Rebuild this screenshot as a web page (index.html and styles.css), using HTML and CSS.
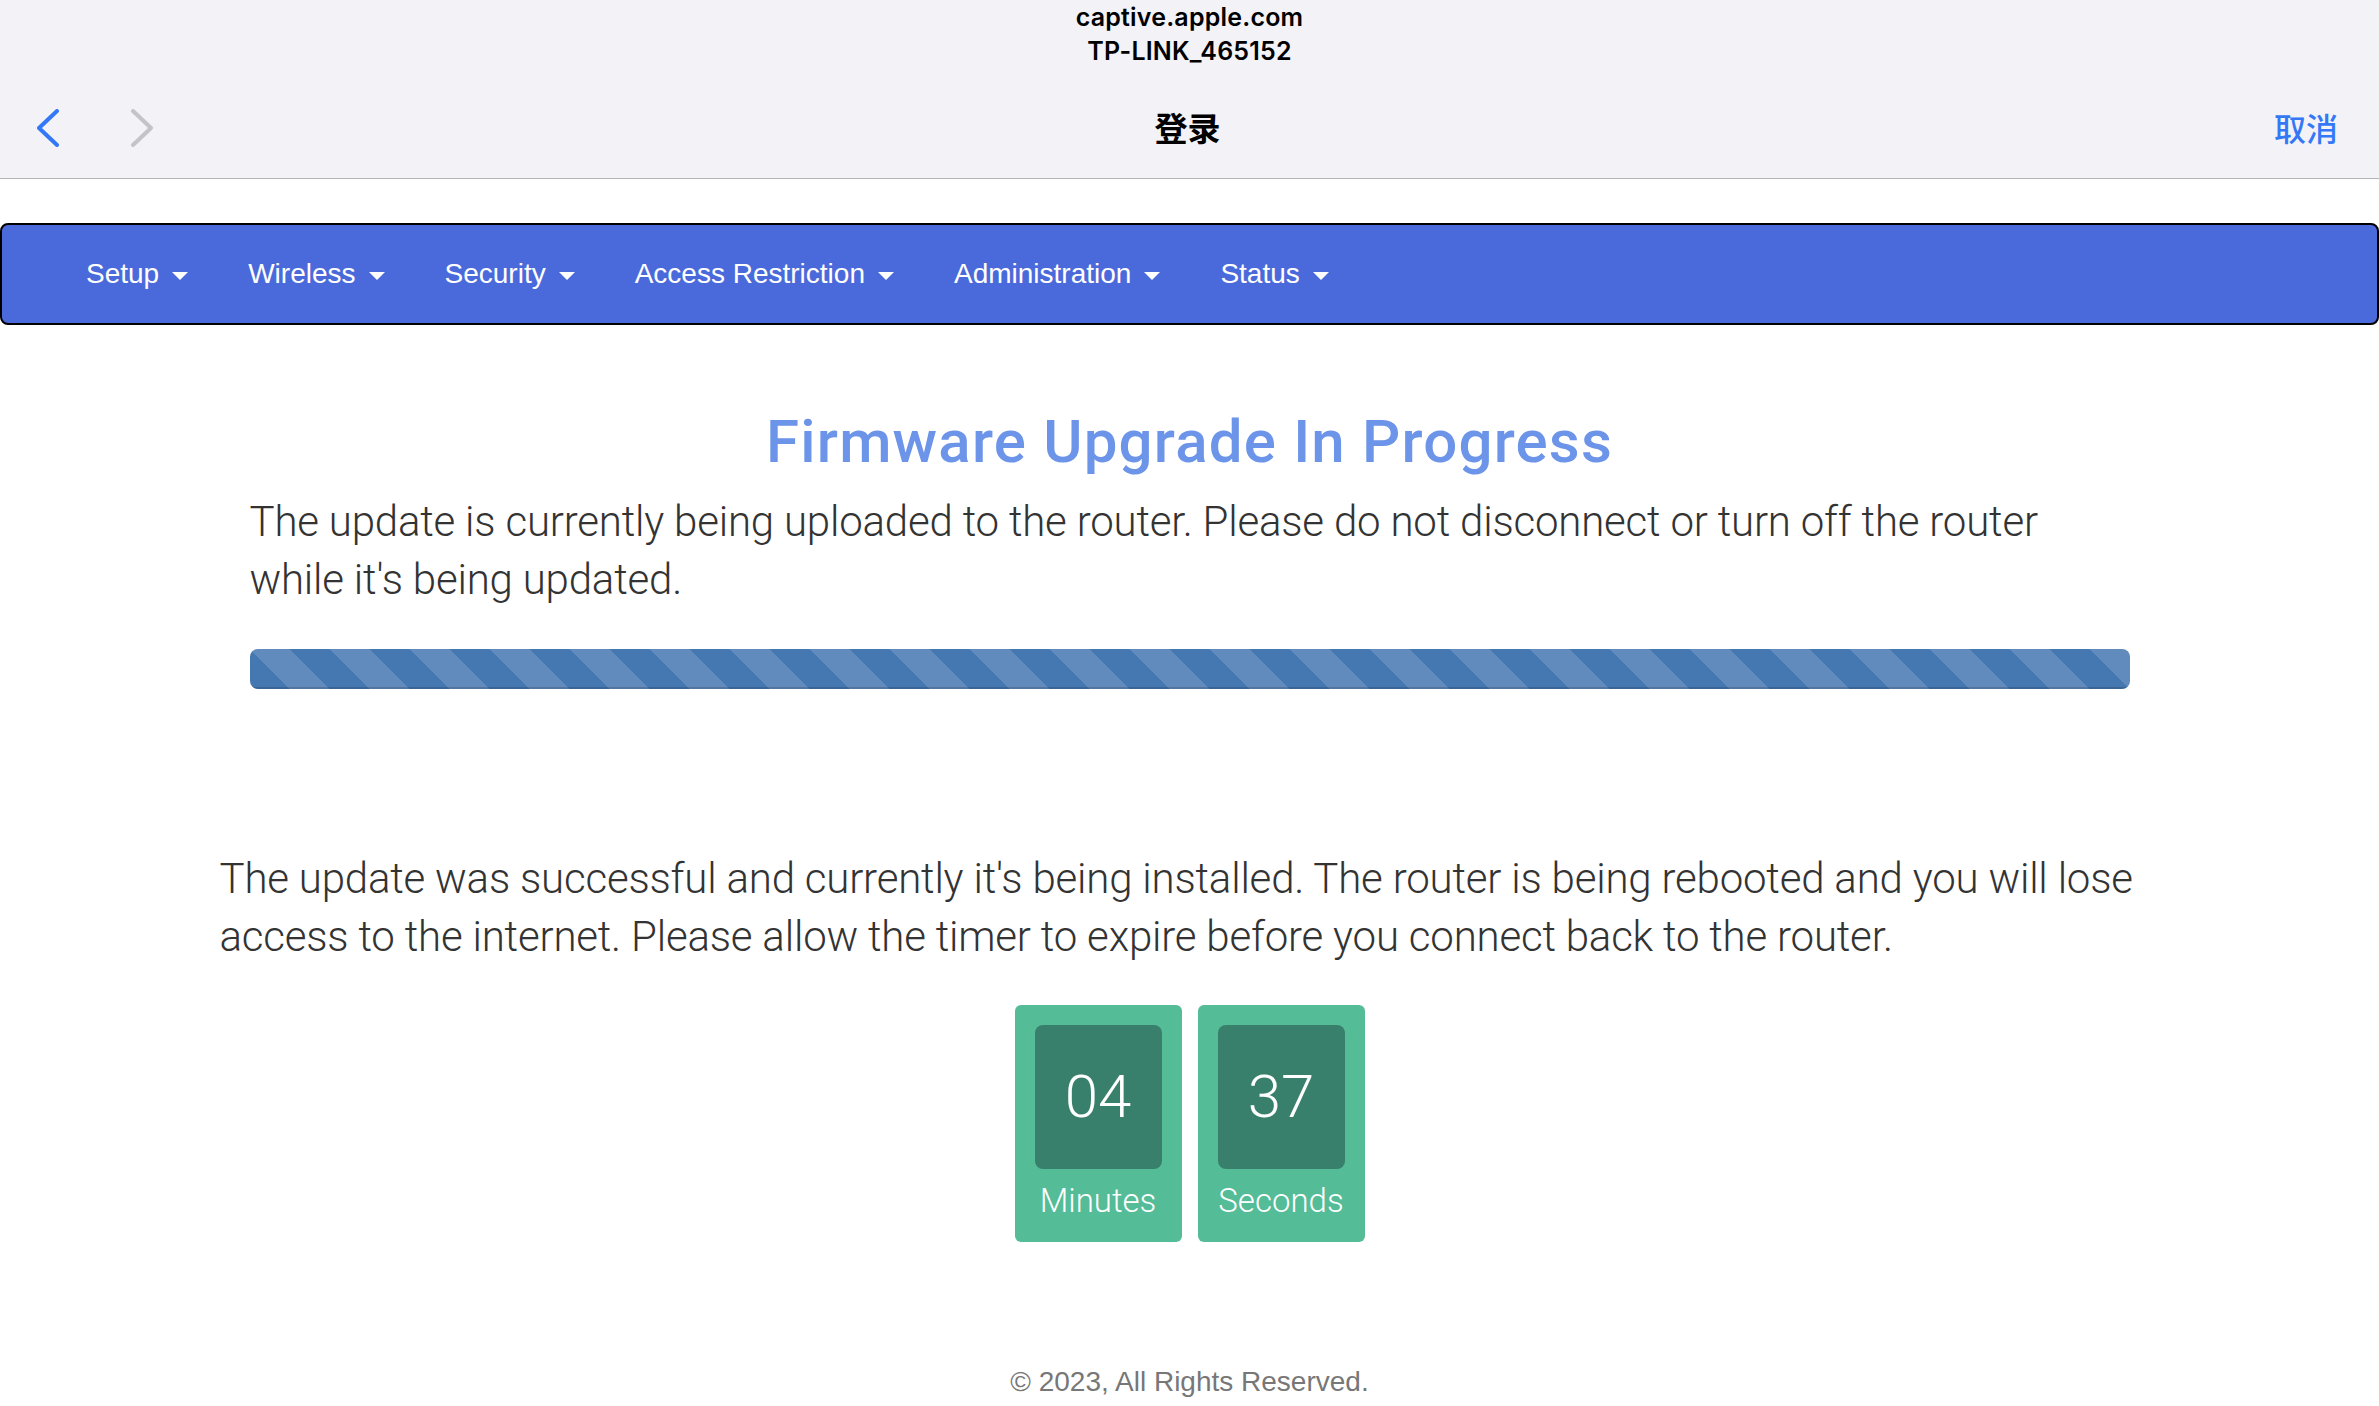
FILE: index.html
```html
<!DOCTYPE html>
<html lang="en">
<head>
<meta charset="utf-8">
<title>Firmware Upgrade In Progress</title>
<link rel="stylesheet" href="styles.css">
</head>
<body>
<header class="ios-bar">
  <div class="ios-host">captive.apple.com</div>
  <div class="ios-ssid">TP-LINK_465152</div>
  <div class="ios-row">
    <div class="ios-arrows">
      <svg class="chev chev-back" width="22" height="38" viewBox="0 0 22 38"><polyline points="20,2 2,19 20,36"/></svg>
      <svg class="chev chev-fwd" width="22" height="38" viewBox="0 0 22 38"><polyline points="2,2 20,19 2,36"/></svg>
    </div>
    <div class="ios-title">登录</div>
    <div class="ios-cancel">取消</div>
  </div>
</header>

<nav class="navbar">
  <ul class="nav">
    <li><a>Setup<span class="caret"></span></a></li>
    <li><a>Wireless<span class="caret"></span></a></li>
    <li><a>Security<span class="caret"></span></a></li>
    <li><a>Access Restriction<span class="caret"></span></a></li>
    <li><a>Administration<span class="caret"></span></a></li>
    <li><a>Status<span class="caret"></span></a></li>
  </ul>
</nav>

<main class="container">
  <h2 class="title">Firmware Upgrade In Progress</h2>
  <p class="lead lead-indent">The update is currently being uploaded to the router. Please do not disconnect or turn off the router while it's being updated.</p>
  <div class="progress"><div class="progress-bar"></div></div>
  <p class="lead lead-wide">The update was successful and currently it's being installed. The router is being rebooted and you will lose access to the internet. Please allow the timer to expire before you connect back to the router.</p>
  <div class="countdown">
    <div class="cd-box">
      <div class="cd-num">04</div>
      <div class="cd-label">Minutes</div>
    </div>
    <div class="cd-box">
      <div class="cd-num">37</div>
      <div class="cd-label">Seconds</div>
    </div>
  </div>
</main>

<footer class="foot">© 2023, All Rights Reserved.</footer>
</body>
</html>
```

FILE: styles.css
```css
* { box-sizing: border-box; }

html, body {
  margin: 0;
  padding: 0;
  background: #ffffff;
}

body {
  font-family: "Liberation Sans", Arial, sans-serif;
  color: #333333;
}

/* ---------- iOS captive portal bar ---------- */
.ios-bar {
  height: 179px;
  background: #f2f2f7;
  border-bottom: 1px solid #b4b4b6;
  font-family: Inter, "Noto Sans", "Noto Sans CJK SC", sans-serif;
  color: #000;
}

.ios-host,
.ios-ssid {
  text-align: center;
  font-size: 25px;
  font-weight: 600;
  line-height: 34px;
  letter-spacing: 0.2px;
}

.ios-row {
  display: grid;
  grid-template-columns: 1fr auto 1fr;
  align-items: center;
  height: 64px;
  margin-top: 28px;
  padding: 0 41px 0 37px;
}

.ios-arrows {
  display: flex;
  align-items: center;
  gap: 72px;
}

.chev {
  display: block;
  fill: none;
  stroke-width: 4;
  stroke-linecap: round;
  stroke-linejoin: round;
}

.chev-back { stroke: #3478f6; }
.chev-fwd { stroke: #c4c4c7; }

.ios-title {
  font-family: "Noto Sans CJK SC", sans-serif;
  font-size: 33px;
  font-weight: 700;
  line-height: 40px;
  padding-bottom: 3px;
}

.ios-cancel {
  justify-self: end;
  font-family: "Noto Sans CJK SC", sans-serif;
  font-size: 32px;
  font-weight: 500;
  line-height: 40px;
  padding-bottom: 3px;
  color: #3478f6;
}

/* ---------- navbar ---------- */
.navbar {
  margin-top: 44px;
  height: 102px;
  background: #4a6adb;
  border: 2px solid #000;
  border-radius: 8px;
  display: flex;
  align-items: center;
}

.nav {
  list-style: none;
  margin: 0;
  padding: 0 0 0 54px;
  display: flex;
  align-items: center;
}

.nav li a {
  display: flex;
  align-items: center;
  padding: 0 30px;
  font-size: 28px;
  line-height: 40px;
  color: #ffffff;
}

.caret {
  display: inline-block;
  width: 0;
  height: 0;
  margin-left: 13px;
  margin-top: 4px;
  border-top: 8px solid #ffffff;
  border-left: 8px solid transparent;
  border-right: 8px solid transparent;
}

/* ---------- main ---------- */
.container {
  width: 1940px;
  margin: 0 auto;
}

.title {
  margin: 84px 0 0;
  text-align: center;
  font-family: Roboto, "Liberation Sans", sans-serif;
  font-size: 60px;
  font-weight: 500;
  line-height: 66px;
  letter-spacing: 1.2px;
  color: #6c94e8;
}

.lead {
  margin: 0;
  font-family: Roboto, "Liberation Sans", sans-serif;
  font-size: 42px;
  font-weight: 300;
  line-height: 58px;
  letter-spacing: -0.2px;
  color: #333333;
}

.lead-indent {
  margin-top: 18px;
  padding: 0 30px;
}

.progress {
  margin: 40px 30px 0;
  height: 40px;
  border-radius: 8px;
  overflow: hidden;
  background: #f5f5f5;
}

.progress-bar {
  width: 100%;
  height: 100%;
  background-color: #4577b1;
  background-image: linear-gradient(45deg,
    rgba(255,255,255,0.15) 25%, transparent 25%,
    transparent 50%, rgba(255,255,255,0.15) 50%,
    rgba(255,255,255,0.15) 75%, transparent 75%, transparent);
  background-size: 80px 80px;
  box-shadow: inset 0 -2px 0 rgba(0,0,0,0.15);
}

.lead-wide {
  margin-top: 161px;
}

.countdown {
  margin-top: 39px;
  display: flex;
  justify-content: center;
  gap: 16px;
}

.cd-box {
  width: 167px;
  height: 237px;
  padding: 20px 20px 0;
  background: #54bc97;
  border-radius: 6px;
  color: #ffffff;
  text-align: center;
  font-family: Roboto, "Liberation Sans", sans-serif;
  font-weight: 300;
}

.cd-num {
  height: 144px;
  border-radius: 8px;
  background: #38806c;
  font-size: 60px;
  line-height: 144px;
}

.cd-label {
  margin-top: 8px;
  font-size: 33px;
  line-height: 48px;
}

/* ---------- footer ---------- */
.foot {
  margin-top: 120px;
  text-align: center;
  font-size: 28px;
  line-height: 40px;
  color: #777777;
}
```
